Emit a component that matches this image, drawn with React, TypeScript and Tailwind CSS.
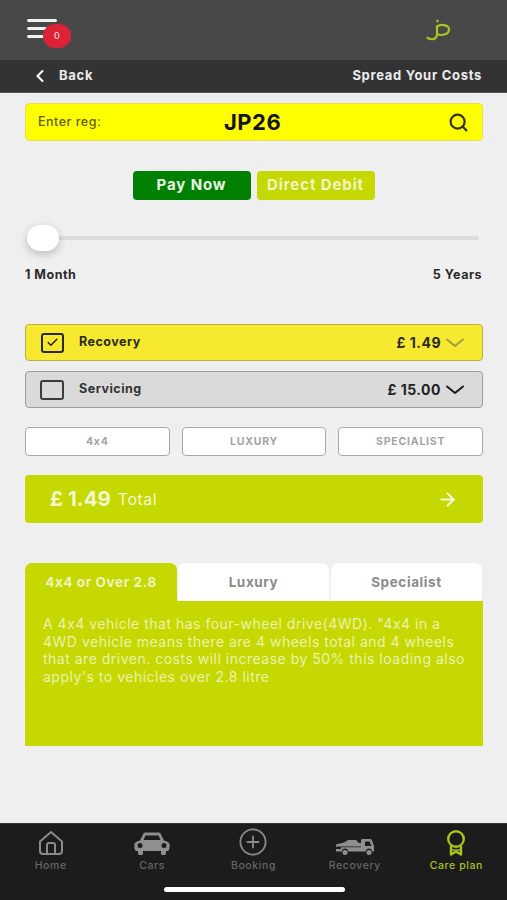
import React from 'react';
import { ChevronLeft, ArrowRight, Search, Check } from 'lucide-react';

const font = "font-['Inter','Liberation_Sans',sans-serif] [font-feature-settings:'calt'_0]";

function HomeIcon() {
  return (
    <svg width="28" height="26" viewBox="0 0 28 26" fill="none" stroke="#8a8a8a" strokeWidth="2" strokeLinejoin="round">
      <path d="M3 11.5 14 2l11 9.5V21a3 3 0 0 1-3 3H6a3 3 0 0 1-3-3z" />
      <path d="M10 24v-9a2 2 0 0 1 2-2h4a2 2 0 0 1 2 2v9" />
    </svg>
  );
}

function CarIcon() {
  return (
    <svg width="36" height="24" viewBox="0 0 36 24" fill="#8f8f8f">
      <path d="M9.5 1.5C10 .8 11 .5 12 .5h12c1 0 2 .3 2.5 1l3.5 7c2.5.6 5 1.6 5.5 3.5.3 1.5.2 4-.3 5.5-.4 1-1.2 1.500-2.2 1.500h-1v2.500a1.500 1.500 0 0 1-1.500 1.500h-2a1.500 1.500 0 0 1-1.500-1.500V19H9v2.500A1.500 1.500 0 0 1 7.500 23h-2A1.500 1.500 0 0 1 4 21.500V19H3c-1 0-1.800-.5-2.200-1.500-.5-1.500-.6-4-.3-5.500C1 10.100 3.500 9.100 6 8.500z" />
      <path fill="#1c1c1c" d="M11.500 3.500h13l2 4.500h-17z" />
      <circle cx="6" cy="13.500" r="2.500" fill="#1c1c1c" />
      <circle cx="30" cy="13.500" r="2.500" fill="#1c1c1c" />
    </svg>
  );
}

function BookingIcon() {
  return (
    <svg width="28" height="28" viewBox="0 0 28 28" fill="none" stroke="#8a8a8a" strokeWidth="1.8" strokeLinecap="round">
      <circle cx="14" cy="14" r="12.6" />
      <path d="M14 8.500v11M8.500 14h11" />
    </svg>
  );
}

function TruckIcon() {
  return (
    <svg width="40" height="18" viewBox="0 0 40 18" fill="#8f8f8f">
      <path d="M1 6.500 9 4.500l4-2.500h8l3 3h2V2.500C26 1.500 27 1 28 1h7c1 0 1.500.5 2 1.500L39 8v5.500h-2a3 3 0 0 0-6 0H13a3 3 0 0 0-6 0H1V11h5V9H1z" />
      <circle cx="10" cy="14.500" r="2.500" />
      <circle cx="34" cy="14.500" r="2.500" />
      <path fill="#1c1c1c" d="M30 3.500h4.500L36.500 8H30zM2 8.500h24v.8H2z" />
    </svg>
  );
}

function RibbonIcon() {
  return (
    <svg width="22" height="26" viewBox="0 0 22 26" fill="none" stroke="#a9c41c" strokeWidth="2.4" strokeLinejoin="round">
      <circle cx="11" cy="9" r="7.8" />
      <path d="M6 16v8.500l5-3 5 3V16" />
      <path d="M6 20h10" strokeWidth="1.4" />
    </svg>
  );
}

function JpLogo() {
  return (
    <svg width="26" height="24" viewBox="0 0 26 24" fill="none" stroke="#a9c41c" strokeWidth="2.2" strokeLinecap="round">
      <path d="M1.500 20C5 22 10 22 11 17V8" />
      <path d="M11 9C13 6 23 6 23 11.500 23 17 15 18 11 16" />
      <circle cx="11.500" cy="3" r="1.300" fill="#a9c41c" stroke="none" />
    </svg>
  );
}

function Chevron({ color }: { color: string }) {
  return (
    <svg width="20" height="10" viewBox="0 0 20 10" fill="none" stroke={color} strokeWidth="2" strokeLinecap="round" strokeLinejoin="round">
      <path d="M2 1.500 10 8l8-6.500" />
    </svg>
  );
}

const navItems = [
  { label: 'Home', icon: <HomeIcon /> },
  { label: 'Cars', icon: <CarIcon /> },
  { label: 'Booking', icon: <BookingIcon /> },
  { label: 'Recovery', icon: <TruckIcon /> },
  { label: 'Care plan', icon: <RibbonIcon />, active: true },
];

const App: React.FC = () => {
  return (
    <div className={`flex h-[900px] w-[507px] flex-col overflow-hidden bg-[#efefef] ${font}`}>
      <div className="flex h-[60px] items-center justify-between bg-[#484848] pl-[27px] pr-[55px]">
        <div className="relative -mt-[3px] flex w-[30px] flex-col gap-[5px]">
          <span className="h-[3px] w-[30px] rounded-full bg-[#f2f2f2]" />
          <span className="h-[3px] w-[20px] rounded-full bg-[#f2f2f2]" />
          <span className="h-[3px] w-[20px] rounded-full bg-[#f2f2f2]" />
          <span className="absolute left-[16px] top-[5px] flex h-[24px] w-[28px] items-center justify-center rounded-full bg-[#dc2336] text-[9px] font-medium text-[#f5d5d8]">
            0
          </span>
        </div>
        <JpLogo />
      </div>

      <div className="flex h-[33px] items-center justify-between border-b border-[#555] bg-[#333333] pl-[30px] pr-[25px] text-[13px] font-bold tracking-[0.7px] text-[#ececec]">
        <div className="flex items-center gap-[9px]">
          <ChevronLeft size={20} strokeWidth={2.5} className="text-white" />
          <span>Back</span>
        </div>
        <span>Spread Your Costs</span>
      </div>

      <div className="ml-[25px] mr-[24px] mt-[10px] flex h-[38px] items-center rounded-[4px] border border-[#e4e05a] bg-[#ffff00] pl-[12px] pr-[13px]">
        <span className="w-[186px] text-[12.5px] font-medium tracking-[0.5px] text-[#5f5f0c]">Enter reg:</span>
        <span className="flex-1 text-[22px] font-bold leading-none tracking-[0.5px] text-[#141414]">JP26</span>
        <Search size={21} strokeWidth={2.5} className="text-[#33330a]" />
      </div>

      <div className="mt-[30px] flex justify-center gap-[6px] text-[15px] font-bold tracking-[0.9px]">
        <button className="h-[29px] w-[118px] rounded-[4px] bg-[#008000] text-[#e8f5e4]">Pay Now</button>
        <button className="h-[29px] w-[118px] rounded-[4px] bg-[#c5d800] text-[#f2f5c8]">Direct Debit</button>
      </div>

      <div className="relative mx-[27px] mt-[24px] h-[28px] pt-[12px]">
        <div className="ml-[30px] mr-[1px] h-[4px] rounded-full bg-[#dcdcdc]" />
        <div className="absolute left-0 top-[1px] h-[26px] w-[32px] rounded-full bg-white shadow-[0_3px_8px_rgba(0,0,0,0.22)]" />
      </div>

      <div className="ml-[25px] mr-[25px] mt-[15px] flex justify-between text-[12.5px] font-bold leading-[16px] tracking-[0.5px] text-[#2a2a2a]">
        <span>1 Month</span>
        <span>5 Years</span>
      </div>

      <div className="ml-[25px] mr-[24px] mt-[41px] flex h-[37px] items-center rounded-[4px] border border-[#b8b048] bg-[#f7e92f] pl-[15px] pr-[17px]">
        <span className="flex h-[20px] w-[23px] items-center justify-center rounded-[3px] border-2 border-[#2a2a1a]">
          <Check size={13} strokeWidth={2.5} className="text-[#1a1a10]" />
        </span>
        <span className="ml-[15px] flex-1 text-[12.5px] font-bold tracking-[0.5px] text-[#2a2a1a]">Recovery</span>
        <span className="mr-[4px] text-[14px] font-bold tracking-[0.5px] text-[#2a2a1a]">£ 1.49</span>
        <Chevron color="#a59b40" />
      </div>

      <div className="ml-[25px] mr-[24px] mt-[10px] flex h-[37px] items-center rounded-[4px] border border-[#9d9d9d] bg-[#dadada] pl-[14px] pr-[17px]">
        <span className="h-[20px] w-[24px] rounded-[3px] border-2 border-[#3c3c3c]" />
        <span className="ml-[15px] flex-1 text-[12.5px] font-bold tracking-[0.5px] text-[#333]">Servicing</span>
        <span className="mr-[4px] text-[14px] font-bold tracking-[0.5px] text-[#222]">£ 15.00</span>
        <Chevron color="#1a1a1a" />
      </div>

      <div className="ml-[25px] mr-[24px] mt-[19px] grid grid-cols-3 gap-[12px]">
        {['4x4', 'LUXURY', 'SPECIALIST'].map((chip) => (
          <div
            key={chip}
            className="flex h-[29px] items-center justify-center rounded-[4px] border border-[#a9a9a9] bg-white text-[10.5px] font-bold tracking-[0.8px] text-[#a3a3a3]"
          >
            {chip}
          </div>
        ))}
      </div>

      <div className="ml-[25px] mr-[24px] mt-[19px] flex h-[48px] items-center rounded-[4px] bg-[#c5d800] pl-[25px] pr-[25px] text-[#f4f7d2]">
        <span className="text-[20.5px] font-bold">£ 1.49</span>
        <span className="ml-[7px] flex-1 text-[16px] font-normal tracking-[0.5px]">Total</span>
        <ArrowRight size={21} strokeWidth={2.4} className="text-[#f8fae0]" />
      </div>

      <div className="mx-[25px] mt-[40px] flex h-[38px] text-[13.5px] font-bold tracking-[0.6px]">
        <div className="flex w-[152px] items-center justify-center rounded-t-[7px] bg-[#c5d800] text-[#f0f4c0]">4x4 or Over 2.8</div>
        <div className="ml-[1px] flex w-[151px] items-center justify-center rounded-t-[7px] bg-white text-[#8b8b8b]">Luxury</div>
        <div className="ml-[2px] flex w-[151px] items-center justify-center rounded-t-[7px] bg-white text-[#8b8b8b]">Specialist</div>
      </div>
      <div className="ml-[25px] mr-[24px] h-[145px] bg-[#c5d800] pl-[18px] pr-[16px] pt-[14px] text-[14px] leading-[17.5px] tracking-[0.5px] text-[#eef2b0]">
        A 4x4 vehicle that has four-wheel drive(4WD). "4x4 in a 4WD vehicle means there are 4 wheels total and 4 wheels that are driven. costs will increase by 50% this loading also apply's to vehicles over 2.8 litre
      </div>

      <div className="relative mt-auto h-[77px] border-t border-[#333] bg-[#1c1c1c]">
        <div className="grid grid-cols-5">
          {navItems.map((item) => (
            <div key={item.label} className="flex flex-col items-center">
              <div className="flex h-[34px] items-end justify-center pb-[2px]">{item.icon}</div>
              <span className={`mt-[1px] text-[10.5px] font-medium leading-[14px] tracking-[0.6px] ${item.active ? 'text-[#a9c41c]' : 'text-[#666666]'}`}>
                {item.label}
              </span>
            </div>
          ))}
        </div>
        <div className="absolute bottom-[8px] left-[164px] h-[5px] w-[181px] rounded-full bg-white" />
      </div>
    </div>
  );
};

export default App;
